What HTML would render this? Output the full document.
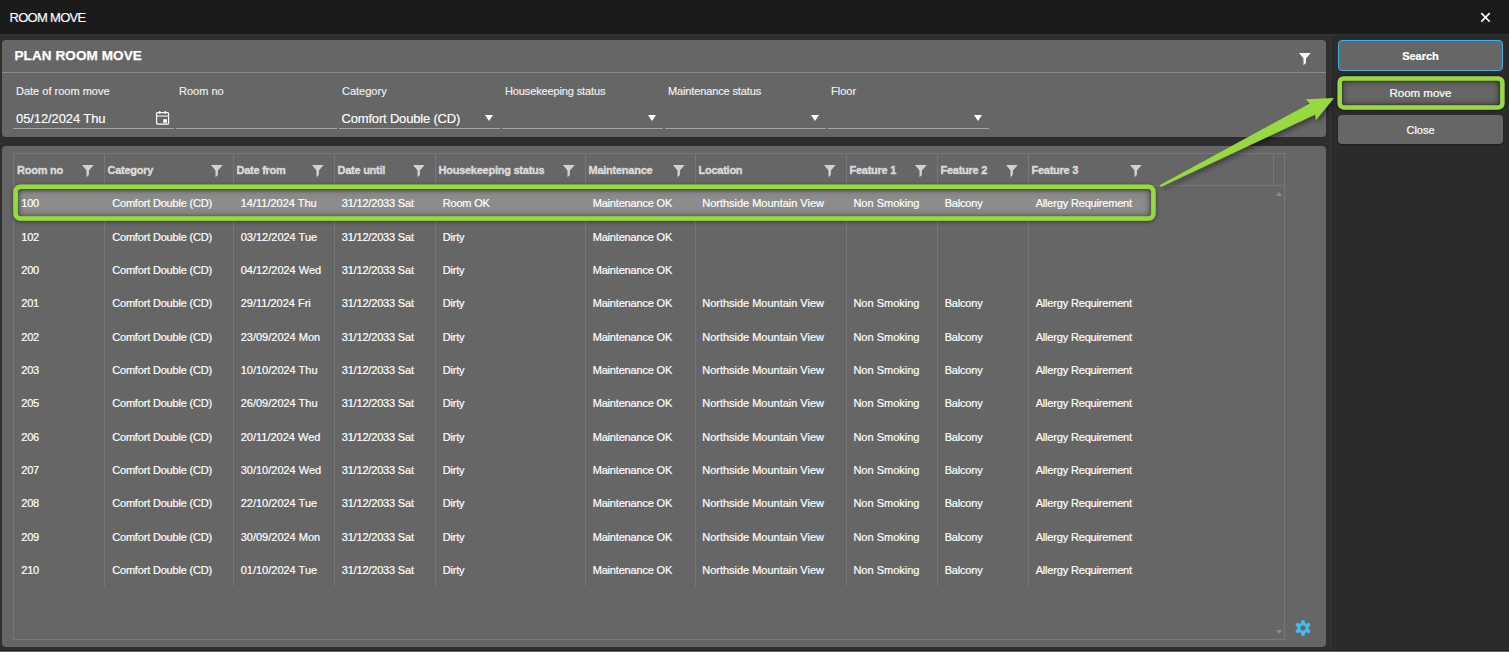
<!DOCTYPE html>
<html><head><meta charset="utf-8"><style>
*{margin:0;padding:0;box-sizing:border-box}
html,body{width:1509px;height:652px;overflow:hidden;background:#2b2b2b;font-family:"Liberation Sans",sans-serif;color:#fff}
.a{position:absolute;white-space:nowrap}
.t{position:absolute;white-space:nowrap;line-height:1}
.fi{position:absolute}
.vl{position:absolute;width:1px;background:#777}
.hl{position:absolute;height:1px;background:#777}
.lbl{font-size:11px;color:#f2f2f2;-webkit-text-stroke:0.15px #f2f2f2}
.val{font-size:13px;color:#fff;letter-spacing:-0.1px;-webkit-text-stroke:0.15px #fff}
.ul{position:absolute;height:1px;background:#a6a6a6;top:128px;width:161px}
.dd{position:absolute;width:0;height:0;border-left:4.1px solid transparent;border-right:4.1px solid transparent;border-top:6px solid #fff;top:115px}
.hd{font-size:11px;font-weight:bold;color:#dcdcdc;letter-spacing:-0.25px;-webkit-text-stroke:0.35px #dcdcdc}
.cl{font-size:11px;color:#fff;letter-spacing:-0.18px;-webkit-text-stroke:0.2px #fff}
.btn{position:absolute;left:1338px;width:165px;background:#666;border-radius:4px;font-size:11px;text-align:center;-webkit-text-stroke:0.2px #fff}
</style></head><body>

<div class="a" style="left:0;top:0;width:1509px;height:34px;background:#1b1b1b"></div>
<div class="a" style="left:0;top:34px;width:1509px;height:1px;background:#333"></div>
<div class="t" style="left:9.5px;top:11px;font-size:13px;letter-spacing:-0.7px;color:#fff;-webkit-text-stroke:0.15px #fff">ROOM MOVE</div>
<svg class="a" style="left:1480px;top:12px" width="11" height="11" viewBox="0 0 11 11"><path d="M1.3 1.2L9.7 9.6M9.7 1.2L1.3 9.6" stroke="#fff" stroke-width="1.7"/></svg>
<div class="a" style="left:0;top:35px;width:1330px;height:615px;background:#2e2e2e"></div>
<div class="a" style="left:1330px;top:35px;width:1px;height:615px;background:#363636"></div>
<div class="a" style="left:2px;top:40px;width:1324px;height:97px;background:#666;border-radius:4px"></div>
<div class="t" style="left:14.5px;top:49px;font-size:13.5px;font-weight:bold;color:#fff;letter-spacing:0.1px;-webkit-text-stroke:0.25px #fff">PLAN ROOM MOVE</div>
<div class="a" style="left:2px;top:72px;width:1324px;height:1px;background:#8a8a8a"></div>
<svg class="fi" width="12" height="13" viewBox="0 0 12 13" style="left:1299.2px;top:52.6px"><path d="M0 0H11.7L6.9 5.4V9.9L4.5 12.2V5.4Z" fill="#fff"/></svg>
<div class="t lbl" style="left:16px;top:86px">Date of room move</div>
<div class="ul" style="left:13px"></div>
<div class="t lbl" style="left:179px;top:86px">Room no</div>
<div class="ul" style="left:176px"></div>
<div class="t lbl" style="left:342px;top:86px">Category</div>
<div class="ul" style="left:339px"></div>
<div class="dd" style="left:485px"></div>
<div class="t lbl" style="left:505px;top:86px;letter-spacing:-0.13px">Housekeeping status</div>
<div class="ul" style="left:502px"></div>
<div class="dd" style="left:648px"></div>
<div class="t lbl" style="left:668px;top:86px;letter-spacing:-0.13px">Maintenance status</div>
<div class="ul" style="left:665px"></div>
<div class="dd" style="left:811px"></div>
<div class="t lbl" style="left:831px;top:86px">Floor</div>
<div class="ul" style="left:828px"></div>
<div class="dd" style="left:974px"></div>
<div class="t val" style="left:16px;top:112px">05/12/2024 Thu</div>
<div class="t val" style="left:341.5px;top:112px;letter-spacing:-0.18px">Comfort Double (CD)</div>
<svg class="a" style="left:155px;top:110px" width="16" height="16" viewBox="0 0 16 16"><rect x="1.6" y="2.6" width="12" height="11.6" rx="1" fill="none" stroke="#fff" stroke-width="1.2"/><rect x="2" y="5.2" width="11.4" height="1.8" fill="#bbb"/><rect x="4" y="1" width="1.4" height="2.6" fill="#fff"/><rect x="9.6" y="1" width="1.4" height="2.6" fill="#fff"/><rect x="8.2" y="9.2" width="3.7" height="3.6" fill="#fff"/></svg>
<div class="a" style="left:2px;top:146px;width:1324px;height:501px;background:#666;border-radius:4px"></div>
<div class="a" style="left:13px;top:153px;width:1272px;height:487px;border:1px solid #787878"></div>
<div class="hl" style="left:13px;top:185px;width:1272px"></div>
<div class="vl" style="left:1273px;top:153px;height:33px"></div>
<div class="vl" style="left:104px;top:153px;height:433px"></div>
<div class="vl" style="left:233px;top:153px;height:433px"></div>
<div class="vl" style="left:334px;top:153px;height:433px"></div>
<div class="vl" style="left:435px;top:153px;height:433px"></div>
<div class="vl" style="left:585px;top:153px;height:433px"></div>
<div class="vl" style="left:695px;top:153px;height:433px"></div>
<div class="vl" style="left:846px;top:153px;height:433px"></div>
<div class="vl" style="left:937px;top:153px;height:433px"></div>
<div class="vl" style="left:1028px;top:153px;height:433px"></div>
<div class="t hd" style="left:17.0px;top:165px">Room no</div>
<svg class="fi" width="12" height="13" viewBox="0 0 12 13" style="left:82.3px;top:164.6px"><path d="M0 0H11.7L6.9 5.4V9.9L4.5 12.2V5.4Z" fill="#d2d2d2"/></svg>
<div class="t hd" style="left:107.5px;top:165px">Category</div>
<svg class="fi" width="12" height="13" viewBox="0 0 12 13" style="left:211.3px;top:164.6px"><path d="M0 0H11.7L6.9 5.4V9.9L4.5 12.2V5.4Z" fill="#d2d2d2"/></svg>
<div class="t hd" style="left:236.5px;top:165px">Date from</div>
<svg class="fi" width="12" height="13" viewBox="0 0 12 13" style="left:312.3px;top:164.6px"><path d="M0 0H11.7L6.9 5.4V9.9L4.5 12.2V5.4Z" fill="#d2d2d2"/></svg>
<div class="t hd" style="left:337.5px;top:165px">Date until</div>
<svg class="fi" width="12" height="13" viewBox="0 0 12 13" style="left:413.3px;top:164.6px"><path d="M0 0H11.7L6.9 5.4V9.9L4.5 12.2V5.4Z" fill="#d2d2d2"/></svg>
<div class="t hd" style="left:438.5px;top:165px">Housekeeping status</div>
<svg class="fi" width="12" height="13" viewBox="0 0 12 13" style="left:563.3px;top:164.6px"><path d="M0 0H11.7L6.9 5.4V9.9L4.5 12.2V5.4Z" fill="#d2d2d2"/></svg>
<div class="t hd" style="left:588.5px;top:165px">Maintenance</div>
<svg class="fi" width="12" height="13" viewBox="0 0 12 13" style="left:673.3px;top:164.6px"><path d="M0 0H11.7L6.9 5.4V9.9L4.5 12.2V5.4Z" fill="#d2d2d2"/></svg>
<div class="t hd" style="left:698.5px;top:165px">Location</div>
<svg class="fi" width="12" height="13" viewBox="0 0 12 13" style="left:824.3px;top:164.6px"><path d="M0 0H11.7L6.9 5.4V9.9L4.5 12.2V5.4Z" fill="#d2d2d2"/></svg>
<div class="t hd" style="left:849.5px;top:165px">Feature 1</div>
<svg class="fi" width="12" height="13" viewBox="0 0 12 13" style="left:915.3px;top:164.6px"><path d="M0 0H11.7L6.9 5.4V9.9L4.5 12.2V5.4Z" fill="#d2d2d2"/></svg>
<div class="t hd" style="left:940.5px;top:165px">Feature 2</div>
<svg class="fi" width="12" height="13" viewBox="0 0 12 13" style="left:1006.3px;top:164.6px"><path d="M0 0H11.7L6.9 5.4V9.9L4.5 12.2V5.4Z" fill="#d2d2d2"/></svg>
<div class="t hd" style="left:1031.5px;top:165px">Feature 3</div>
<svg class="fi" width="12" height="13" viewBox="0 0 12 13" style="left:1130.3px;top:164.6px"><path d="M0 0H11.7L6.9 5.4V9.9L4.5 12.2V5.4Z" fill="#d2d2d2"/></svg>
<div class="a" style="left:1275.8px;top:191.8px;width:0;height:0;border-left:3.1px solid transparent;border-right:3.1px solid transparent;border-bottom:4.2px solid #8a8a8a"></div>
<div class="a" style="left:1275.8px;top:629.7px;width:0;height:0;border-left:3.1px solid transparent;border-right:3.1px solid transparent;border-top:4.3px solid #8a8a8a"></div>
<div class="a" style="left:15px;top:186px;width:1138px;height:33px;background:#8c8c8c;border-radius:5px;box-shadow:inset 0 0 9px 2px rgba(0,0,0,0.42)"></div>
<div class="t cl" style="left:21.2px;top:198.20px">100</div>
<div class="t cl" style="left:112.2px;top:198.20px">Comfort Double (CD)</div>
<div class="t cl" style="left:240.7px;top:198.20px;letter-spacing:0px">14/11/2024 Thu</div>
<div class="t cl" style="left:341.7px;top:198.20px">31/12/2033 Sat</div>
<div class="t cl" style="left:442.7px;top:198.20px">Room OK</div>
<div class="t cl" style="left:592.7px;top:198.20px">Maintenance OK</div>
<div class="t cl" style="left:702.3px;top:198.20px;letter-spacing:-0.02px">Northside Mountain View</div>
<div class="t cl" style="left:853.4px;top:198.20px;letter-spacing:0px">Non Smoking</div>
<div class="t cl" style="left:944.7px;top:198.20px">Balcony</div>
<div class="t cl" style="left:1035.7px;top:198.20px">Allergy Requirement</div>
<div class="t cl" style="left:21.2px;top:231.53px">102</div>
<div class="t cl" style="left:112.2px;top:231.53px">Comfort Double (CD)</div>
<div class="t cl" style="left:240.7px;top:231.53px;letter-spacing:0px">03/12/2024 Tue</div>
<div class="t cl" style="left:341.7px;top:231.53px">31/12/2033 Sat</div>
<div class="t cl" style="left:442.7px;top:231.53px">Dirty</div>
<div class="t cl" style="left:592.7px;top:231.53px">Maintenance OK</div>
<div class="t cl" style="left:21.2px;top:264.87px">200</div>
<div class="t cl" style="left:112.2px;top:264.87px">Comfort Double (CD)</div>
<div class="t cl" style="left:240.7px;top:264.87px;letter-spacing:0px">04/12/2024 Wed</div>
<div class="t cl" style="left:341.7px;top:264.87px">31/12/2033 Sat</div>
<div class="t cl" style="left:442.7px;top:264.87px">Dirty</div>
<div class="t cl" style="left:592.7px;top:264.87px">Maintenance OK</div>
<div class="t cl" style="left:21.2px;top:298.20px">201</div>
<div class="t cl" style="left:112.2px;top:298.20px">Comfort Double (CD)</div>
<div class="t cl" style="left:240.7px;top:298.20px;letter-spacing:0px">29/11/2024 Fri</div>
<div class="t cl" style="left:341.7px;top:298.20px">31/12/2033 Sat</div>
<div class="t cl" style="left:442.7px;top:298.20px">Dirty</div>
<div class="t cl" style="left:592.7px;top:298.20px">Maintenance OK</div>
<div class="t cl" style="left:702.3px;top:298.20px;letter-spacing:-0.02px">Northside Mountain View</div>
<div class="t cl" style="left:853.4px;top:298.20px;letter-spacing:0px">Non Smoking</div>
<div class="t cl" style="left:944.7px;top:298.20px">Balcony</div>
<div class="t cl" style="left:1035.7px;top:298.20px">Allergy Requirement</div>
<div class="t cl" style="left:21.2px;top:331.53px">202</div>
<div class="t cl" style="left:112.2px;top:331.53px">Comfort Double (CD)</div>
<div class="t cl" style="left:240.7px;top:331.53px;letter-spacing:0px">23/09/2024 Mon</div>
<div class="t cl" style="left:341.7px;top:331.53px">31/12/2033 Sat</div>
<div class="t cl" style="left:442.7px;top:331.53px">Dirty</div>
<div class="t cl" style="left:592.7px;top:331.53px">Maintenance OK</div>
<div class="t cl" style="left:702.3px;top:331.53px;letter-spacing:-0.02px">Northside Mountain View</div>
<div class="t cl" style="left:853.4px;top:331.53px;letter-spacing:0px">Non Smoking</div>
<div class="t cl" style="left:944.7px;top:331.53px">Balcony</div>
<div class="t cl" style="left:1035.7px;top:331.53px">Allergy Requirement</div>
<div class="t cl" style="left:21.2px;top:364.86px">203</div>
<div class="t cl" style="left:112.2px;top:364.86px">Comfort Double (CD)</div>
<div class="t cl" style="left:240.7px;top:364.86px;letter-spacing:0px">10/10/2024 Thu</div>
<div class="t cl" style="left:341.7px;top:364.86px">31/12/2033 Sat</div>
<div class="t cl" style="left:442.7px;top:364.86px">Dirty</div>
<div class="t cl" style="left:592.7px;top:364.86px">Maintenance OK</div>
<div class="t cl" style="left:702.3px;top:364.86px;letter-spacing:-0.02px">Northside Mountain View</div>
<div class="t cl" style="left:853.4px;top:364.86px;letter-spacing:0px">Non Smoking</div>
<div class="t cl" style="left:944.7px;top:364.86px">Balcony</div>
<div class="t cl" style="left:1035.7px;top:364.86px">Allergy Requirement</div>
<div class="t cl" style="left:21.2px;top:398.20px">205</div>
<div class="t cl" style="left:112.2px;top:398.20px">Comfort Double (CD)</div>
<div class="t cl" style="left:240.7px;top:398.20px;letter-spacing:0px">26/09/2024 Thu</div>
<div class="t cl" style="left:341.7px;top:398.20px">31/12/2033 Sat</div>
<div class="t cl" style="left:442.7px;top:398.20px">Dirty</div>
<div class="t cl" style="left:592.7px;top:398.20px">Maintenance OK</div>
<div class="t cl" style="left:702.3px;top:398.20px;letter-spacing:-0.02px">Northside Mountain View</div>
<div class="t cl" style="left:853.4px;top:398.20px;letter-spacing:0px">Non Smoking</div>
<div class="t cl" style="left:944.7px;top:398.20px">Balcony</div>
<div class="t cl" style="left:1035.7px;top:398.20px">Allergy Requirement</div>
<div class="t cl" style="left:21.2px;top:431.53px">206</div>
<div class="t cl" style="left:112.2px;top:431.53px">Comfort Double (CD)</div>
<div class="t cl" style="left:240.7px;top:431.53px;letter-spacing:0px">20/11/2024 Wed</div>
<div class="t cl" style="left:341.7px;top:431.53px">31/12/2033 Sat</div>
<div class="t cl" style="left:442.7px;top:431.53px">Dirty</div>
<div class="t cl" style="left:592.7px;top:431.53px">Maintenance OK</div>
<div class="t cl" style="left:702.3px;top:431.53px;letter-spacing:-0.02px">Northside Mountain View</div>
<div class="t cl" style="left:853.4px;top:431.53px;letter-spacing:0px">Non Smoking</div>
<div class="t cl" style="left:944.7px;top:431.53px">Balcony</div>
<div class="t cl" style="left:1035.7px;top:431.53px">Allergy Requirement</div>
<div class="t cl" style="left:21.2px;top:464.86px">207</div>
<div class="t cl" style="left:112.2px;top:464.86px">Comfort Double (CD)</div>
<div class="t cl" style="left:240.7px;top:464.86px;letter-spacing:0px">30/10/2024 Wed</div>
<div class="t cl" style="left:341.7px;top:464.86px">31/12/2033 Sat</div>
<div class="t cl" style="left:442.7px;top:464.86px">Dirty</div>
<div class="t cl" style="left:592.7px;top:464.86px">Maintenance OK</div>
<div class="t cl" style="left:702.3px;top:464.86px;letter-spacing:-0.02px">Northside Mountain View</div>
<div class="t cl" style="left:853.4px;top:464.86px;letter-spacing:0px">Non Smoking</div>
<div class="t cl" style="left:944.7px;top:464.86px">Balcony</div>
<div class="t cl" style="left:1035.7px;top:464.86px">Allergy Requirement</div>
<div class="t cl" style="left:21.2px;top:498.20px">208</div>
<div class="t cl" style="left:112.2px;top:498.20px">Comfort Double (CD)</div>
<div class="t cl" style="left:240.7px;top:498.20px;letter-spacing:0px">22/10/2024 Tue</div>
<div class="t cl" style="left:341.7px;top:498.20px">31/12/2033 Sat</div>
<div class="t cl" style="left:442.7px;top:498.20px">Dirty</div>
<div class="t cl" style="left:592.7px;top:498.20px">Maintenance OK</div>
<div class="t cl" style="left:702.3px;top:498.20px;letter-spacing:-0.02px">Northside Mountain View</div>
<div class="t cl" style="left:853.4px;top:498.20px;letter-spacing:0px">Non Smoking</div>
<div class="t cl" style="left:944.7px;top:498.20px">Balcony</div>
<div class="t cl" style="left:1035.7px;top:498.20px">Allergy Requirement</div>
<div class="t cl" style="left:21.2px;top:531.53px">209</div>
<div class="t cl" style="left:112.2px;top:531.53px">Comfort Double (CD)</div>
<div class="t cl" style="left:240.7px;top:531.53px;letter-spacing:0px">30/09/2024 Mon</div>
<div class="t cl" style="left:341.7px;top:531.53px">31/12/2033 Sat</div>
<div class="t cl" style="left:442.7px;top:531.53px">Dirty</div>
<div class="t cl" style="left:592.7px;top:531.53px">Maintenance OK</div>
<div class="t cl" style="left:702.3px;top:531.53px;letter-spacing:-0.02px">Northside Mountain View</div>
<div class="t cl" style="left:853.4px;top:531.53px;letter-spacing:0px">Non Smoking</div>
<div class="t cl" style="left:944.7px;top:531.53px">Balcony</div>
<div class="t cl" style="left:1035.7px;top:531.53px">Allergy Requirement</div>
<div class="t cl" style="left:21.2px;top:564.86px">210</div>
<div class="t cl" style="left:112.2px;top:564.86px">Comfort Double (CD)</div>
<div class="t cl" style="left:240.7px;top:564.86px;letter-spacing:0px">01/10/2024 Tue</div>
<div class="t cl" style="left:341.7px;top:564.86px">31/12/2033 Sat</div>
<div class="t cl" style="left:442.7px;top:564.86px">Dirty</div>
<div class="t cl" style="left:592.7px;top:564.86px">Maintenance OK</div>
<div class="t cl" style="left:702.3px;top:564.86px;letter-spacing:-0.02px">Northside Mountain View</div>
<div class="t cl" style="left:853.4px;top:564.86px;letter-spacing:0px">Non Smoking</div>
<div class="t cl" style="left:944.7px;top:564.86px">Balcony</div>
<div class="t cl" style="left:1035.7px;top:564.86px">Allergy Requirement</div>
<svg class="a" style="left:0;top:170px" width="1200" height="70" viewBox="0 170 1200 70"><defs><filter id="gs" x="-5%" y="-50%" width="110%" height="200%"><feGaussianBlur in="SourceAlpha" stdDeviation="2"/><feOffset dy="0.5"/><feComponentTransfer><feFuncA type="linear" slope="0.5"/></feComponentTransfer><feMerge><feMergeNode/><feMergeNode in="SourceGraphic"/></feMerge></filter></defs><rect x="15.6" y="186.7" width="1137.8" height="31.8" rx="5" fill="none" stroke="#96d941" stroke-width="4.6" filter="url(#gs)"/></svg>
<svg class="a" style="left:1294px;top:619px" width="18" height="18" viewBox="-9 -9 18 18">
<g fill="#44bdf2"><circle r="5.6"/>
<rect x="-1.65" y="-8" width="3.3" height="16" rx="0.9"/>
<rect x="-1.65" y="-8" width="3.3" height="16" rx="0.9" transform="rotate(60)"/>
<rect x="-1.65" y="-8" width="3.3" height="16" rx="0.9" transform="rotate(120)"/></g>
<circle r="2.6" fill="#666"/></svg>
<div class="btn" style="top:40px;height:31px;border:1px solid #40b0e8;font-weight:bold"><span class="t" style="position:absolute;left:0;right:0;top:10px">Search</span></div>
<div class="btn" style="top:77px;height:31px;box-shadow:0 1px 2px rgba(0,0,0,0.4)"><span class="t" style="position:absolute;left:0;right:0;top:10.5px;font-size:11.5px">Room move</span></div>
<div class="btn" style="top:114.7px;height:29.7px;box-shadow:0 1px 2px rgba(0,0,0,0.4)"><span class="t" style="position:absolute;left:0;right:0;top:10.2px">Close</span></div>
<div class="a" style="left:1341px;top:80px;width:159px;height:26px;border-radius:3px;box-shadow:inset 0 0 7px 1px rgba(0,0,0,0.45)"></div>
<svg class="a" style="left:1320px;top:60px" width="189" height="70" viewBox="1320 60 189 70"><defs><filter id="bs" x="-10%" y="-30%" width="120%" height="160%"><feGaussianBlur in="SourceAlpha" stdDeviation="1.5"/><feComponentTransfer><feFuncA type="linear" slope="0.6"/></feComponentTransfer><feMerge><feMergeNode/><feMergeNode in="SourceGraphic"/></feMerge></filter></defs><rect x="1339.75" y="78.45" width="162.6" height="29" rx="4" fill="none" stroke="#96d941" stroke-width="4.5" filter="url(#bs)"/></svg>
<svg class="a" style="left:0;top:0" width="1509" height="652" viewBox="0 0 1509 652">
<defs><filter id="sh" x="-20%" y="-20%" width="140%" height="140%"><feGaussianBlur in="SourceAlpha" stdDeviation="2.5"/><feOffset dx="2" dy="3"/><feComponentTransfer><feFuncA type="linear" slope="0.4"/></feComponentTransfer><feMerge><feMergeNode/><feMergeNode in="SourceGraphic"/></feMerge></filter></defs>
<path d="M1160.8 187.0L1159.9 185.0L1309.9 103.4L1305.7 99.2L1334 98L1316 119.9L1315.2 114.5Z" fill="#96d941" filter="url(#sh)"/></svg>
<div class="a" style="left:0;top:650px;width:1509px;height:1px;background:#272727"></div><div class="a" style="left:0;top:651px;width:1509px;height:1px;background:#5b5b5b"></div>
</body></html>
